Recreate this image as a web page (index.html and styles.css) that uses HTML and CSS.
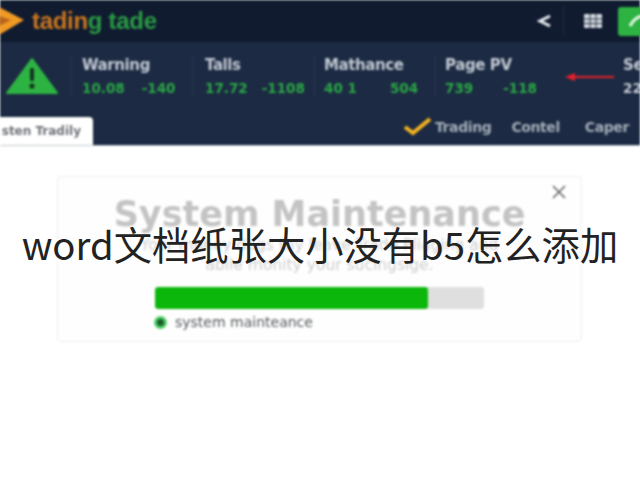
FILE: index.html
```html
<!DOCTYPE html>
<html lang="en">
<head>
    <meta charset="UTF-8">
    <title>System Maintenance</title>
    <link rel="stylesheet" href="styles.css">
</head>
<body>
    <div class="page">
        <div class="blurred">
            <div class="top-bar">
                <svg class="logo-icon" width="26" height="34" viewBox="0 0 26 34">
                    <path d="M0 3 L25 16 L0 31 Z" fill="#f09a24"/>
                    <path d="M0 12 L12 16 L0 22 Z" fill="#b9651c"/>
                </svg>
                <div class="logo-text"><span class="orange">tadin</span><span class="green">g tade</span></div>
                <div class="top-actions">
                    <svg class="back-icon" width="16" height="16" viewBox="0 0 16 16">
                        <path d="M13 3 L3 8 L13 13" fill="none" stroke="#e6e9ee" stroke-width="3"/>
                    </svg>
                    <div class="top-sep"></div>
                    <svg class="grid-icon" width="18" height="14" viewBox="0 0 18 14">
                        <rect width="18" height="14" rx="1" fill="#d5d9de"/>
                        <path d="M6 0 V14 M12 0 V14 M0 5 H18 M0 9.5 H18" stroke="#26344a" stroke-width="1"/>
                    </svg>
                    <div class="green-btn">
                        <svg width="22" height="20" viewBox="0 0 22 20">
                            <path d="M2 15 Q7 6 14 5" fill="none" stroke="#e3f5e3" stroke-width="3"/>
                        </svg>
                    </div>
                </div>
            </div>

            <div class="stats-bar">
                <div class="stats-row">
                    <svg class="warn-icon" width="54" height="38" viewBox="0 0 54 38">
                        <path d="M27 2 L52 36 H2 Z" fill="#2db342" stroke="#2db342" stroke-width="2" stroke-linejoin="round"/>
                        <rect x="25" y="11" width="4" height="13" rx="1.5" fill="#12351f"/>
                        <circle cx="27" cy="29" r="2.6" fill="#12351f"/>
                    </svg>
                    <div class="stat stat-first">
                        <div class="stat-name">Warning</div>
                        <div class="stat-values"><span>10.08</span><span>-140</span></div>
                    </div>
                    <div class="stat stat-talls">
                        <div class="stat-name">Talls</div>
                        <div class="stat-values"><span>17.72</span><span>-1108</span></div>
                    </div>
                    <div class="stat stat-math">
                        <div class="stat-name">Mathance</div>
                        <div class="stat-values"><span>40 1</span><span>504</span></div>
                    </div>
                    <div class="stat stat-page">
                        <div class="stat-name">Page PV</div>
                        <div class="stat-values"><span>739</span><span>-118</span></div>
                    </div>
                    <div class="stat-arrow">
                        <svg width="50" height="10" viewBox="0 0 50 10">
                            <path d="M0 5 L10 1 V4 H49 V6 H10 V9 Z" fill="#e3202a"/>
                        </svg>
                    </div>
                    <div class="stat stat-last">
                        <div class="stat-name">Se</div>
                        <div class="stat-num">22</div>
                    </div>
                </div>

                <div class="tab-row">
                    <div class="tab-active">sten Tradily</div>
                    <div class="tab-links">
                        <svg width="30" height="20" viewBox="0 0 30 20">
                            <path d="M2 11 L10 17 L27 3" fill="none" stroke="#f2b21f" stroke-width="4"/>
                        </svg>
                        <span class="tab-trading">Trading</span>
                        <span>Contel</span>
                        <span class="tab-caper">Caper</span>
                    </div>
                </div>
            </div>

            <div class="content">
                <div class="card">
                    <svg class="close-icon" width="16" height="14" viewBox="0 0 16 14">
                        <path d="M2 1 L14 13 M14 1 L2 13" stroke="#5c6066" stroke-width="1.5"/>
                    </svg>
                    <h1 class="card-title">System Maintenance</h1>
                    <p class="card-text">Your money dogs thy leave Trade Pliaging and<br>abile monity your sucingsige.</p>
                    <div class="progress">
                        <div class="progress-fill" style="width: 83%"></div>
                    </div>
                    <div class="status">
                        <span class="status-dot"></span>
                        <span>system mainteance</span>
                    </div>
                </div>
            </div>
        </div>

        <div class="overlay-title">word文档纸张大小没有b5怎么添加</div>
    </div>
</body>
</html>
```

FILE: styles.css
```css
html, body {
    margin: 0;
    padding: 0;
    background: white;
}

.page {
    width: 640px;
    height: 480px;
    position: relative;
    overflow: hidden;
    font-family: "DejaVu Sans", sans-serif;
}

.blurred {
    filter: blur(0.8px);
    height: 480px;
}

.top-bar {
    height: 42px;
    background: #101b30;
    display: flex;
    align-items: center;
}

.logo-icon {
    flex: none;
    margin-left: -1px;
}

.logo-text {
    margin-left: 7px;
    font-family: "Liberation Sans", sans-serif;
    font-size: 24px;
    font-weight: bold;
    letter-spacing: -0.3px;
}

.orange {
    color: #c9761f;
}

.green {
    color: #2a9a43;
}

.top-actions {
    margin-left: auto;
    display: flex;
    align-items: center;
    margin-right: -22px;
}

.back-icon {
    margin-right: 10px;
}

.top-sep {
    width: 1px;
    height: 30px;
    background: #1b2a41;
    margin-right: 20px;
}

.grid-icon {
    margin-right: 16px;
}

.green-btn {
    width: 44px;
    height: 29px;
    border-radius: 3px;
    background: #2db342;
    display: flex;
    align-items: center;
    padding-left: 10px;
    box-sizing: border-box;
}

.stats-bar {
    height: 104px;
    background: #1c2b43;
    border-bottom: 1px solid #c3c8d0;
    box-sizing: border-box;
    display: flex;
    flex-direction: column;
    justify-content: space-between;
}

.stats-row {
    display: flex;
    align-items: stretch;
    height: 42px;
    margin-top: 13px;
    padding-left: 5px;
}

.warn-icon {
    flex: none;
    margin: 2px 12px 0 0;
}

.stat {
    border-left: 1px solid #27374f;
    padding-left: 10px;
    box-sizing: border-box;
    flex: none;
}

.stat-first {
    width: 121px;
}

.stat-talls {
    width: 122px;
    padding-left: 12px;
}

.stat-math {
    width: 121px;
    padding-left: 9px;
}

.stat-page {
    width: 118px;
    padding-left: 9px;
}

.stat-last {
    border-left: none;
    padding-left: 8px;
}

.stat-name {
    font-size: 15px;
    font-weight: bold;
    letter-spacing: -0.4px;
    color: #c2c8d2;
    margin-top: 1px;
    white-space: nowrap;
}

.stat-values {
    display: flex;
    gap: 17px;
    margin-top: 6px;
    font-size: 13.5px;
    font-weight: bold;
    color: #2aa644;
    white-space: nowrap;
}

.stat-talls .stat-values {
    gap: 14px;
}

.stat-math .stat-values {
    gap: 33px;
}

.stat-page .stat-values {
    gap: 30px;
}

.stat-num {
    margin-top: 6px;
    font-size: 13.5px;
    font-weight: bold;
    color: #c2c8d2;
}

.stat-arrow {
    flex: none;
    display: flex;
    align-items: center;
    margin-left: 12px;
    margin-top: 1px;
}

.tab-row {
    display: flex;
    align-items: flex-end;
    justify-content: space-between;
}

.tab-active {
    width: 94px;
    height: 28px;
    box-sizing: border-box;
    margin-left: -1px;
    background: white;
    border-radius: 0 4px 0 0;
    color: #6d7278;
    font-size: 12px;
    font-weight: bold;
    line-height: 28px;
    text-align: right;
    padding-right: 12px;
    overflow: hidden;
    white-space: nowrap;
}

.tab-links {
    display: flex;
    align-items: center;
    gap: 20px;
    height: 36px;
    margin-right: -1px;
    width: 238px;
    color: #a4acb8;
    font-size: 14px;
    font-weight: bold;
    letter-spacing: -0.4px;
    overflow: hidden;
    white-space: nowrap;
}

.tab-links svg {
    flex: none;
    margin-right: -18px;
    margin-top: -3px;
}

.tab-caper {
    margin-left: 5px;
}

.content {
    padding: 30px 58px 0 57px;
}

.card {
    position: relative;
    height: 166px;
    box-sizing: border-box;
    border: 1px solid #eeeeee;
    border-radius: 4px;
    background: #fefefe;
    text-align: center;
    padding: 18px 97px 0;
}

.close-icon {
    position: absolute;
    top: 8px;
    right: 14px;
}

.card-title {
    margin: 0 -60px;
    font-size: 35px;
    line-height: 38px;
    font-weight: bold;
    color: #c4c4c4;
    white-space: nowrap;
}

.card-text {
    margin: 2px -60px 0;
    font-size: 15.5px;
    line-height: 20px;
    color: #cfcfcf;
    white-space: nowrap;
}

.progress {
    height: 22px;
    margin-top: 12px;
    border-radius: 3px;
    background: #dfdfdf;
    overflow: hidden;
}

.progress-fill {
    height: 22px;
    border-radius: 3px;
    background: #0cb70c;
}

.status {
    display: flex;
    align-items: center;
    gap: 8px;
    margin-top: 5px;
    color: #55585c;
    font-size: 14px;
    margin-left: -1px;
}

.status-dot {
    width: 7px;
    height: 7px;
    border: 3px solid #4ccf63;
    border-radius: 50%;
    background: #1d5c2c;
    flex: none;
}

.overlay-title {
    position: absolute;
    left: 0;
    right: 0;
    top: 221px;
    text-align: center;
    font-family: "Noto Sans CJK SC", "Noto Sans", sans-serif;
    font-size: 38.3px;
    line-height: 46px;
    color: #222222;
    white-space: nowrap;
}
```
